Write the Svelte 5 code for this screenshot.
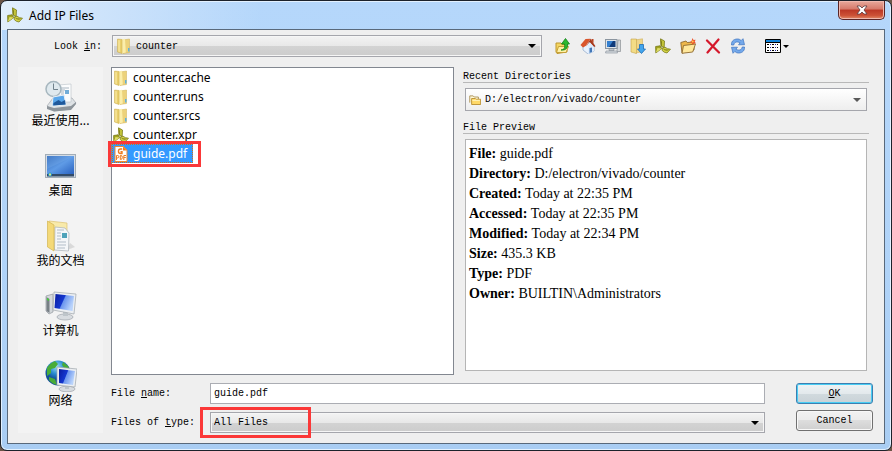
<script lang="ts">
	// File chooser dialog for adding IP files to the project.

	interface FileEntry {
		name: string;
		icon: string;
	}

	const places = [
		{ id: 'recent', label: '最近使用...' },
		{ id: 'desktop', label: '桌面' },
		{ id: 'documents', label: '我的文档' },
		{ id: 'computer', label: '计算机' },
		{ id: 'network', label: '网络' },
	];

	const tools = [
		{ id: 'up', title: 'Up one level' },
		{ id: 'home', title: 'Home' },
		{ id: 'computer', title: 'Desktop' },
		{ id: 'download', title: 'Working directory' },
		{ id: 'vivado', title: 'Project directory' },
		{ id: 'new', title: 'New folder' },
		{ id: 'delete', title: 'Delete' },
		{ id: 'refresh', title: 'Refresh' },
	];

	const files: FileEntry[] = [
		{ name: 'counter.cache', icon: 'folder' },
		{ name: 'counter.runs', icon: 'folder' },
		{ name: 'counter.srcs', icon: 'folder' },
		{ name: 'counter.xpr', icon: 'vivado' },
		{ name: 'guide.pdf', icon: 'pdf' },
	];

	const details = [
		['File', 'guide.pdf'],
		['Directory', 'D:/electron/vivado/counter'],
		['Created', 'Today at 22:35 PM'],
		['Accessed', 'Today at 22:35 PM'],
		['Modified', 'Today at 22:34 PM'],
		['Size', '435.3 KB'],
		['Type', 'PDF'],
		['Owner', 'BUILTIN\\Administrators'],
	];

	let selected = $state('guide.pdf');
	let fileName = $state('guide.pdf');

	function pick(entry: FileEntry) {
		selected = entry.name;
		fileName = entry.name;
	}
</script>

{#snippet icon(id: string)}
	<svg class="icon" viewBox="0 0 16 16" aria-hidden="true">
		{#if id === 'folder'}
			<path d="M7 2l6.500-1v13.500L7 15.500z" fill="#ecd27a" stroke="#d0b052" stroke-width=".5" />
			<path d="M5.500 1.500L9 .8l.8 13.700-4.300 1z" fill="#fbeeaa" />
			<path d="M1.500 1l4.500.5v14L1.500 14z" fill="#e9cf6c" stroke="#cbab48" stroke-width=".5" />
			<path d="M2.300 2l1.500.2V14l-1.500-.5z" fill="#f6e59b" />
			<path d="M12 10h1.500v3.500H12z" fill="#5fb0dc" />
		{:else if id === 'vivado'}
			<path d="M5.500 .8L9.500 3 9.200 9.500 6 8z" fill="#c3c43a" stroke="#6f700f" stroke-width=".7" />
			<path d="M5.500 .8L7 4l-.2 4.300L5.800 8z" fill="#7f8014" />
			<path d="M.6 8.500L5 7.800l1.800 2.700L.8 15z" fill="#a3a51f" stroke="#6f700f" stroke-width=".7" />
			<path d="M.8 14.700L2.500 10l4.300.5z" fill="#dddc68" />
			<path d="M7.200 10l2.800-.8q2 1.800 5.500 2L12 15q-3-.3-4.800-2.500z" fill="#d3d245" stroke="#6f700f" stroke-width=".7" />
			<path d="M7.500 10.200q3 2 7.800 1.100L12 12.800q-2.500 0-4.500-2.600z" fill="#85861a" />
		{:else if id === 'pdf'}
			<path d="M2 .5h8.500L14 4v11.500H2z" fill="#fff" stroke="#ef8a32" />
			<path d="M10 .5V4.500h4z" fill="#ef7c20" />
			<path d="M9.200 3H7.500Q5.500 3 5.500 5v.5Q5.500 7.500 7.500 7.500H9V5.700H7.500" fill="none" stroke="#ef7c20" stroke-width="1.400" />
			<path d="M3.500 14V9.500h1.300q1 0 1 1.200t-1 1.200H3.500M7.300 9.500V13.400h.7q1.300 0 1.300-2t-1.300-1.900zM10.800 14V9.500H13M10.800 11.500h2" fill="none" stroke="#ef7c20" />
		{:else if id === 'up'}
			<path d="M1 5h5l1 1.500h5V14l-10 1.500L1 14z" fill="#f4d663" stroke="#bd962d" />
			<path d="M3.500 8.500h10L11 14.500H1.500z" fill="#fff1a5" stroke="#c6a038" />
			<path d="M6 12c4-.5 4-3 3.500-6H6.500l4-5.500L14.500 6h-2C13 10 11 12.500 6 12z" fill="#2db82f" stroke="#128016" stroke-width=".8" />
		{:else if id === 'home'}
			<path d="M3 8l5-5 6 5v5l-6 3-5-4z" fill="#e8f1fd" stroke="#8ea6c6" stroke-width=".7" />
			<path d="M8 7.500l6 0V13l-6 3z" fill="#9fc4f0" />
			<path d="M11.500 1h2v4l-2-2z" fill="#bb4422" />
			<path d="M.5 7L5.500 1l5-.2-4.500 7-3 1.700z" fill="#d9552c" />
			<path d="M10.500 .8l5 7.500-1.500.7-4.500-5L6 8.800z" fill="#a83b1d" />
			<path d="M10 4.500l4 4.500v4l-6 3V7.500z" fill="#dfecfc" />
			<path d="M9.500 10l2.500-.5v4.500L9.500 15z" fill="#4377b6" />
		{:else if id === 'computer'}
			<path d="M13 2h2.500v11.500H12z" fill="#d5d8dc" stroke="#8c9095" stroke-width=".7" />
			<rect x=".5" y="1.500" width="11.500" height="9" fill="#dfe4e9" stroke="#8b959f" />
			<rect x="2" y="3" width="8.500" height="6" fill="#103a7a" />
			<path d="M2 3h6L4 9H2z" fill="#347fcf" />
			<path d="M4 11h5v1.500H4zM1 13h11l.5 2H.5z" fill="#d9dde1" stroke="#828a93" stroke-width=".6" />
		{:else if id === 'download'}
			<path d="M5 2l7.500-1.200v13L5 15z" fill="#efd58a" stroke="#ceb05a" stroke-width=".6" />
			<path d="M1 1h5.500v14.500L1 14z" fill="#f3dc86" stroke="#c6a246" stroke-width=".6" />
			<path d="M9.500 6.500h4v4.500h2l-4 4.500-4-4.500h2z" fill="#43a5ec" stroke="#1c6cb8" stroke-width=".8" />
		{:else if id === 'new'}
			<path d="M.8 4.500L6 3l1.200 1.500L14 4v8L2 15z" fill="#edb74a" stroke="#8f6a30" stroke-width=".9" />
			<path d="M3.500 7.500L15.500 6l-2.800 8L2 15.300z" fill="#ffe89c" stroke="#8f6a30" stroke-width=".9" />
			<path d="M12.500 0l1 2 2.200-.3-1 1.900 1.300 1.800-2.300-.2-1.200 1.800-.7-2.200-2.300-.6 2-1.200z" fill="#ee542c" />
			<circle cx="12.700" cy="3.500" r="1" fill="#ffc74c" />
		{:else if id === 'delete'}
			<path d="M2 2.500L14 14.500M13.500 1.500L2.500 14.500" stroke="#d5182b" stroke-width="2.200" stroke-linecap="round" />
		{:else if id === 'refresh'}
			<path d="M1.500 7C1 2.500 5 .2 9.200 1.200l2 1.300L13 .7l1.500 6-6 .1 1.600-2C6.500 3 4.200 4.200 3.800 7z" fill="#74a9eb" stroke="#3d73be" stroke-width=".7" />
			<path d="M14.500 9c.5 4.500-3.500 6.800-7.700 5.800l-2-1.300L3 15.300l-1.500-6 6-.1-1.600 2c3.600 1.800 5.900.6 6.300-2.200z" fill="#74a9eb" stroke="#3d73be" stroke-width=".7" />
		{:else if id === 'openfolder'}
			<path d="M1 11.500V2.500h4.500L7 4h5.500v3" fill="#fff7d6" stroke="#a98f52" stroke-width="1.200" />
			<path d="M3.500 6h5l1 1h6v7h-12z" fill="#ffd968" stroke="#b88d30" stroke-width="1.200" />
			<path d="M4.500 8.500h10" stroke="#fff2b8" stroke-width="1.500" />
		{/if}
	</svg>
{/snippet}

{#snippet placeIcon(id: string)}
	<svg class="place-icon" viewBox="0 0 32 32" aria-hidden="true">
		<defs>
			<linearGradient id="screen-{id}" x1="0" y1="0" x2="1" y2=".4">
				<stop offset="0" stop-color="#0a1c9e" />
				<stop offset=".5" stop-color="#1437d0" />
				<stop offset=".55" stop-color="#6b95ee" />
				<stop offset="1" stop-color="#b9d3fb" />
			</linearGradient>
			<linearGradient id="wall-{id}" x1="0" y1="0" x2="1" y2="1">
				<stop offset="0" stop-color="#2c63b4" />
				<stop offset=".5" stop-color="#5f9be6" />
				<stop offset="1" stop-color="#2a62c0" />
			</linearGradient>
			<radialGradient id="sea-{id}" cx=".45" cy=".25">
				<stop offset="0" stop-color="#9be0f8" />
				<stop offset=".6" stop-color="#2688cf" />
				<stop offset="1" stop-color="#134f98" />
			</radialGradient>
		</defs>
		{#if id === 'recent'}
			<path d="M2 26l6-8h19l4 5-5 6-17 2z" fill="#dfe3e6" stroke="#a2a8ad" stroke-width=".7" />
			<path d="M2 26l7 2 17-2 5-4v2l-5 6-17 1.500-7-2.500z" fill="#8e959b" />
			<path d="M13 5l13-1v18H13z" fill="#fbfcfd" stroke="#b9c1c7" stroke-width=".6" />
			<path d="M16 8h8M16 10h4M16 12h3M16 14h3" stroke="#a9b6c1" />
			<path d="M20 10h4v4h-4z" fill="#72add8" />
			<circle cx="8.500" cy="9" r="7.500" fill="#dfe9ee" stroke="#a6b6be" stroke-width="1.500" />
			<path d="M8.500 3.500V9.500H13" fill="none" stroke="#71828c" />
			<path d="M8 17l11-2 2 10-14 1z" fill="#5aa7ea" stroke="#e7eff5" />
			<path d="M8.500 23l5-3 3 2 3.500-2 .7 4.500-12.500 1z" fill="#20599b" />
		{:else if id === 'desktop'}
			<rect x=".5" y="4.500" width="30" height="23" fill="#d4dce5" stroke="#a2adb7" />
			<rect x="2" y="6" width="27" height="18" fill="url(#wall-{id})" />
			<path d="M2 6h27L2 19z" fill="#7fb2ee" opacity=".3" />
			<rect x="2" y="24" width="27" height="2.500" fill="#334b67" />
			<circle cx="5" cy="24.500" r="2" fill="#2695c6" />
			<path d="M4 23.500h2v2H4z" fill="#d9e681" />
		{:else if id === 'documents'}
			<path d="M22 30l8-3-5-4z" fill="#c8c8c8" opacity=".6" />
			<path d="M4 1l18 2v9L9 30z" fill="#f8eaaa" stroke="#ddc272" stroke-width=".7" />
			<path d="M10 7l10 1 4 5-.5 18L9.500 30z" fill="#f4f6f8" stroke="#a8b0b7" stroke-width=".7" />
			<path d="M12 10h7M12 13h4M12 16h4M12 19h4M12 22h9M12 25h9M12 28h8" stroke="#b2bdc8" />
			<path d="M17 13h5v5h-5z" fill="#4ea2b9" />
			<path d="M2.500 1l6.500 4v26l-6.500-4z" fill="#f4d978" stroke="#d3b551" stroke-width=".7" />
		{:else if id === 'computer'}
			<path d="M1 6l7-2v18l-4 2-3-3z" fill="#d4d8db" stroke="#90979d" stroke-width=".7" />
			<path d="M1.500 7l3 2v14l-3-2z" fill="#777f85" />
			<path d="M2 8l2 1v2l-2-1z" fill="#45cb38" />
			<ellipse cx="20" cy="27" rx="8" ry="3" fill="#d8dce0" stroke="#9ea4aa" stroke-width=".7" />
			<path d="M18 20h5v6h-5z" fill="#bec5ca" />
			<path d="M9 2l22 2-2 20-21-4z" fill="#eceff2" stroke="#9ea5ab" stroke-width=".7" />
			<path d="M10.500 4l18.500 2-1.500 15-18-3z" fill="url(#screen-{id})" />
		{:else if id === 'network'}
			<circle cx="13" cy="13" r="12.500" fill="url(#sea-{id})" />
			<path d="M2 8q3-5 8-7l3 3-3 4-4 1v4l-4 3zM4 17l6 2 2 6q-5-1-8-5zM18 2l5 4 2 4-5-1-3-4z" fill="#49ac38" />
			<ellipse cx="22" cy="29" rx="8" ry="2.800" fill="#d8dce0" stroke="#9ea4aa" stroke-width=".7" />
			<path d="M20 24h4v5h-4z" fill="#bec5ca" />
			<path d="M12 7l20 2-2 18-18-2z" fill="#eceff2" stroke="#9ea5ab" stroke-width=".7" />
			<path d="M14 9l16 2-2 14-14-2z" fill="url(#screen-{id})" />
		{/if}
	</svg>
{/snippet}

{#snippet caret()}
	<svg class="caret" viewBox="0 0 10 6" aria-hidden="true"><path d="M1 1h8L5 5z" fill="currentColor" /></svg>
{/snippet}

<main class="window">
	<header class="titlebar">
		{@render icon('vivado')}
		<h1>Add IP Files</h1>
		<button class="close" aria-label="Close">
			<svg viewBox="0 0 12 10" aria-hidden="true">
				<path d="M1 1h3l2 2 2-2h3L8 5l3 4H8L6 7 4 9H1l3-4z" fill="#fff" stroke="#5b3a3d" stroke-width=".8" />
			</svg>
		</button>
	</header>

	<div class="client">
		<div class="lookin">
			<label for="look-in">Look <u>i</u>n:</label>
			<div class="combo shaded">
				{@render icon('folder')}
				<select id="look-in"><option>counter</option></select>
				{@render caret()}
			</div>
			<div class="toolbar">
				{#each tools as tool (tool.id)}
					<button class="tool" title={tool.title} aria-label={tool.title}>{@render icon(tool.id)}</button>
				{/each}
				<button class="tool views" title="View" aria-label="View">
					<svg viewBox="0 0 24 14" aria-hidden="true">
						<path d="M.5 .5h15v13H.5z" fill="#fff" stroke="#000" />
						<path d="M1 1h14v2H1z" fill="#1184dc" />
						<path d="M1 3.500h14" stroke="#000" />
						<path d="M2 5.500h2M7 5.500h2M12 5.500h1M2 8.500h2M7 8.500h2M12 8.500h1M2 11.500h2M7 11.500h2M12 11.500h1" stroke="#000" />
						<path d="M5 5.500h1M10 5.500h1M5 8.500h1M10 8.500h1M5 11.500h1M10 11.500h1" stroke="#25259d" />
						<path d="M18 6h6l-3 3z" />
					</svg>
				</button>
			</div>
		</div>

		<div class="content">
			<nav class="places">
				{#each places as place (place.id)}
					<button class="place">
						{@render placeIcon(place.id)}
						<span>{place.label}</span>
					</button>
				{/each}
			</nav>

			<div class="main">
				<div class="upper">
					<ul class="files">
						{#each files as entry (entry.name)}
							<li>
								<button class="file" class:selected={entry.name === selected} onclick={() => pick(entry)}>
									{@render icon(entry.icon)}
									<span>{entry.name}</span>
								</button>
								{#if entry.name === 'guide.pdf'}
									<span class="mark mark-file"></span>
								{/if}
							</li>
						{/each}
					</ul>

					<div class="side">
						<label class="group-title" for="recent-dirs">Recent Directories</label>
						<div class="combo recent">
							{@render icon('openfolder')}
							<select id="recent-dirs"><option>D:/electron/vivado/counter</option></select>
							{@render caret()}
						</div>
						<h2 class="group-title">File Preview</h2>
						<dl class="preview">
							{#each details as [term, value] (term)}
								<div>
									<dt>{term}:</dt>
									<dd>{value}</dd>
								</div>
							{/each}
						</dl>
					</div>
				</div>

				<div class="lower">
					<div class="fields">
						<label for="file-name">File <u>n</u>ame:</label>
						<input id="file-name" type="text" bind:value={fileName} />
						<label for="file-type">Files of <u>t</u>ype:</label>
						<div class="combo shaded type">
							<select id="file-type"><option>All Files</option></select>
							{@render caret()}
							<span class="mark mark-type"></span>
						</div>
					</div>
					<div class="actions">
						<button class="action default"><u>O</u>K</button>
						<button class="action">Cancel</button>
					</div>
				</div>
			</div>
		</div>
	</div>
</main>

<style>
	:global(body) {
		background: #6b5547;
	}

	.window {
		box-sizing: border-box;
		min-height: 100vh;
		display: flex;
		flex-direction: column;
		padding: 0 6px 6px;
		border: 1px solid #1c222b;
		border-radius: 7px;
		background:
			linear-gradient(90deg, #e2effc, #cfe4fb 90px, transparent 260px) 0 0 / 100% 29px no-repeat,
			linear-gradient(#b5d7fb, #b0d3f8 60%, #a9cdf3);
		box-shadow: inset 0 0 0 1px #e3f1ff;
		font-family: 'Liberation Mono', 'Noto Sans CJK SC', monospace;
		font-size: 10px;
		color: #000;
	}

	button,
	input,
	select {
		font: inherit;
		color: inherit;
		margin: 0;
	}

	.icon {
		flex: none;
		width: 16px;
		height: 16px;
	}

	.titlebar {
		display: flex;
		align-items: center;
		gap: 6px;
		height: 28px;
	}

	.titlebar h1 {
		flex: 1;
		margin: 0;
		font: 12px 'Noto Sans', sans-serif;
	}

	.close {
		align-self: flex-start;
		display: flex;
		align-items: center;
		justify-content: center;
		width: 47px;
		height: 19px;
		padding: 0;
		border: 1px solid #5a2526;
		border-top: 0;
		border-radius: 0 0 5px 5px;
		background: linear-gradient(#e8a99c, #d5796a 45%, #bb3725 50%, #cc5136 80%, #e18c68);
		box-shadow: inset 0 0 0 1px #efb8ae;
	}

	.close svg {
		width: 12px;
		height: 10px;
	}

	.client {
		flex: 1;
		display: flex;
		flex-direction: column;
		gap: 10px;
		padding: 5px 11px 10px 10px;
		border: 1px solid #59697b;
		background: #efefef;
	}

	.lookin {
		display: flex;
		align-items: center;
		gap: 8px;
	}

	.lookin label {
		flex: none;
		width: 84px;
		padding-right: 2px;
		text-align: right;
	}

	.combo {
		box-sizing: border-box;
		display: flex;
		align-items: center;
		gap: 4px;
		height: 22px;
		padding: 0 4px 0 3px;
		border: 1px solid #a5a6ac;
		background: linear-gradient(#fff, #eee);
	}

	.shaded {
		background: linear-gradient(#f3f3f3, #e8e8e8 50%, #d3d3d3 50%, #ccc);
		box-shadow: inset 0 0 0 1px #f6f6f6;
	}

	.lookin .combo {
		flex: 1;
	}

	.combo select {
		flex: 1;
		min-width: 0;
		padding: 0;
		border: 0;
		outline: 0;
		background: none;
		appearance: none;
	}

	.caret {
		flex: none;
		width: 10px;
		height: 6px;
	}

	.toolbar {
		flex: none;
		display: flex;
		width: 323px;
	}

	.tool {
		display: flex;
		align-items: center;
		justify-content: center;
		width: 25px;
		height: 22px;
		padding: 0;
		border: 0;
		background: none;
	}

	.views {
		margin-left: 14px;
	}

	.views svg {
		width: 24px;
		height: 14px;
	}

	.content {
		flex: 1;
		display: flex;
		gap: 8px;
	}

	.places {
		flex: none;
		box-sizing: border-box;
		width: 85px;
		display: flex;
		flex-direction: column;
		gap: 20px;
		padding-top: 13px;
		background: #f3f3f3;
	}

	.place {
		display: flex;
		flex-direction: column;
		align-items: center;
		height: 50px;
		padding: 0;
		border: 0;
		background: none;
		font: 12px/16px 'Noto Sans CJK SC', sans-serif;
	}

	.place-icon {
		flex: none;
		width: 32px;
		height: 32px;
	}

	.main {
		flex: 1;
		min-width: 0;
		display: flex;
		flex-direction: column;
		gap: 8px;
	}

	.upper {
		flex: 1;
		display: grid;
		grid-template-columns: 343fr 406fr;
		gap: 9px;
		padding-right: 4px;
	}

	.files {
		margin: 0;
		padding: 0;
		border: 1px solid #828790;
		background: #fff;
		list-style: none;
		font: 12px 'Noto Sans', sans-serif;
	}

	.files li {
		position: relative;
	}

	.file {
		display: flex;
		align-items: center;
		gap: 4px;
		height: 19px;
		padding: 0 6px 0 1px;
		border: 0;
		background: none;
	}

	.selected {
		background: #3399ff;
		color: #fff;
		outline: 1px dotted #d0701a;
		outline-offset: -1px;
	}

	.mark {
		position: absolute;
		box-sizing: border-box;
		border: 3px solid #fb3838;
		pointer-events: none;
	}

	.mark-file {
		left: -4px;
		top: -3px;
		width: 93px;
		height: 26px;
	}

	.mark-type {
		left: -11px;
		top: -6px;
		width: 111px;
		height: 31px;
	}

	.side {
		display: flex;
		flex-direction: column;
	}

	.group-title {
		height: 15px;
		margin: 0;
		border-bottom: 1px solid #b8b8b8;
		font-size: 10px;
		font-weight: 400;
		line-height: 20px;
	}

	.recent {
		height: 23px;
		margin: 5px 2px 7px;
	}

	.recent .icon {
		width: 12px;
		height: 12px;
	}

	.recent .caret {
		color: #595959;
	}

	.preview {
		flex: 1;
		margin: 5px 2px 4px;
		padding: 4px 3px;
		border: 1px solid #b5b5b5;
		background: #fff;
		font: 14px/20px 'Liberation Serif', serif;
	}

	.preview dt,
	.preview dd {
		display: inline;
		margin: 0;
	}

	.preview dt {
		font-weight: 700;
	}

	.lower {
		display: flex;
		gap: 31px;
	}

	.fields {
		flex: 1;
		display: grid;
		grid-template-columns: 99px 1fr;
		row-gap: 8px;
		align-items: center;
	}

	.fields input {
		box-sizing: border-box;
		min-width: 0;
		height: 21px;
		padding: 0 3px;
		border: 1px solid #abadb3;
		background: #fff;
	}

	.type {
		position: relative;
		height: 21px;
	}

	.actions {
		display: flex;
		flex-direction: column;
		gap: 6px;
	}

	.action {
		width: 77px;
		height: 21px;
		padding: 0;
		border: 1px solid #707070;
		border-radius: 3px;
		background: linear-gradient(#f2f2f2, #ebebeb 50%, #ddd 50%, #cfcfcf);
		box-shadow: inset 0 0 0 1px #f8f8f8;
	}

	.default {
		border-color: #3c7fb1;
		background: linear-gradient(#eef3f5, #e3e9ec 50%, #d1dade 50%, #c9d2d7);
		box-shadow: inset 0 0 0 1px #48cdf4;
	}
</style>
